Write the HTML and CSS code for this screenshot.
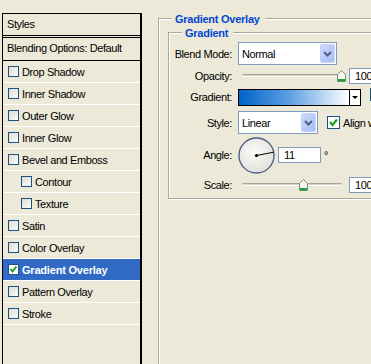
FILE: index.html
```html
<!DOCTYPE html>
<html>
<head>
<meta charset="utf-8">
<link rel="stylesheet" href="styles.css">
</head>
<body>
<div class="page">
  <div class="styles-list">
    <div class="sl-head">Styles</div>
    <div class="sl-blend">Blending Options: Default</div>
    <div class="item"><span class="cb"></span>Drop Shadow</div>
    <div class="item"><span class="cb"></span>Inner Shadow</div>
    <div class="item"><span class="cb"></span>Outer Glow</div>
    <div class="item"><span class="cb"></span>Inner Glow</div>
    <div class="item"><span class="cb"></span>Bevel and Emboss</div>
    <div class="item sub"><span class="cb"></span>Contour</div>
    <div class="item sub"><span class="cb"></span>Texture</div>
    <div class="item"><span class="cb"></span>Satin</div>
    <div class="item"><span class="cb"></span>Color Overlay</div>
    <div class="item sel"><span class="cb on"><svg width="9" height="9" viewBox="0 0 9 9"><path d="M1.5 4 L3.5 6.5 L7.5 1.5" fill="none" stroke="#21a121" stroke-width="2"/></svg></span>Gradient Overlay</div>
    <div class="item"><span class="cb"></span>Pattern Overlay</div>
    <div class="item"><span class="cb"></span>Stroke</div>
  </div>

  <div class="main">
    <div class="group outer">
      <div class="g-head"><span class="seg"></span><span class="g-title">Gradient Overlay</span><span class="seg fill"></span></div>
      <div class="group inner">
        <div class="g-head"><span class="seg"></span><span class="g-title">Gradient</span><span class="seg fill"></span></div>
        <div class="rows">
          <div class="row r1">
            <label class="lbl">Blend Mode:</label>
            <div class="select wide"><span class="sel-text">Normal</span><span class="btn"><svg width="13" height="17" viewBox="0 0 13 17"><polyline points="3,7 6.5,10.5 10,7" fill="none" stroke="#4d6185" stroke-width="2"/></svg></span></div>
          </div>
          <div class="row r2">
            <label class="lbl">Opacity:</label>
            <div class="slider"><div class="track"></div><svg class="thumb t-op" width="9" height="12" viewBox="0 0 9 12"><path d="M0.5 4.5 L4.5 0.5 L8.5 4.5 V11.5 H0.5 Z" fill="#f6f6f2" stroke="#7f8c80"/><rect x="1" y="9" width="7" height="2.5" fill="#22a334"/></svg></div>
            <div class="num">100</div>
          </div>
          <div class="row r3">
            <label class="lbl">Gradient:</label>
            <div class="grad"><span class="grad-fill"></span><span class="grad-arrow"><span class="tri"></span></span></div>
            <span class="cb13 rev"></span>
          </div>
          <div class="row r4">
            <label class="lbl">Style:</label>
            <div class="select narrow"><span class="sel-text">Linear</span><span class="btn"><svg width="13" height="17" viewBox="0 0 13 17"><polyline points="3,7 6.5,10.5 10,7" fill="none" stroke="#4d6185" stroke-width="2"/></svg></span></div>
            <span class="cb13 align"><svg width="11" height="11" viewBox="0 0 11 11"><path d="M2 5 L4.5 8 L9 2.5" fill="none" stroke="#21a121" stroke-width="2.2"/></svg></span>
            <span class="cb-text">Align with layer</span>
          </div>
          <div class="row r5">
            <label class="lbl">Angle:</label>
            <svg class="dial" width="37" height="37" viewBox="0 0 37 37">
              <defs><radialGradient id="dg" cx="45%" cy="40%" r="60%"><stop offset="0" stop-color="#fbfbf9"/><stop offset="1" stop-color="#e2e2dc"/></radialGradient></defs>
              <circle cx="18.5" cy="18.5" r="17.5" fill="url(#dg)" stroke="#4c6085" stroke-width="1.4"/>
              <line x1="18.5" y1="18.5" x2="35.7" y2="15.2" stroke="#000" stroke-width="1"/>
              <circle cx="18.5" cy="18.5" r="1.6" fill="#000"/>
            </svg>
            <div class="num angle">11</div>
            <span class="deg">°</span>
          </div>
          <div class="row r6">
            <label class="lbl">Scale:</label>
            <div class="slider"><div class="track"></div><svg class="thumb t-sc" width="9" height="12" viewBox="0 0 9 12"><path d="M0.5 4.5 L4.5 0.5 L8.5 4.5 V11.5 H0.5 Z" fill="#f6f6f2" stroke="#7f8c80"/><rect x="1" y="9" width="7" height="2.5" fill="#22a334"/></svg></div>
            <div class="num">100</div>
          </div>
        </div>
      </div>
    </div>
  </div>
</div>
</body>
</html>
```
FILE: styles.css
```css
html, body {
  margin: 0;
  padding: 0;
  background: #ece9d8;
  overflow: hidden;
}
body {
  font-family: "Liberation Sans", Arial, sans-serif;
  font-size: 11px;
  letter-spacing: -0.4px;
  color: #000;
}
.page {
  display: flex;
  width: 520px;
  height: 364px;
  align-items: flex-start;
}

/* left styles list */
.styles-list {
  margin: 13px 0 0 2px;
  width: 137px;
  height: 400px;
  border-top: 1px solid #000;
  border-left: 1px solid #000;
  border-right: 2px solid #000;
  flex-shrink: 0;
}
.sl-head {
  height: 21px;
  line-height: 21px;
  padding-left: 4px;
  border-bottom: 3px double #000;
}
.sl-blend {
  height: 22px;
  line-height: 21px;
  padding-left: 4px;
  border-bottom: 1px solid #000;
}
.item {
  display: flex;
  align-items: center;
  height: 21px;
  padding-left: 5px;
  border-bottom: 1px solid #fff;
  white-space: nowrap;
}
.item.sub { padding-left: 18px; }
.item.sel {
  background: #316ac5;
  color: #fff;
  font-weight: bold;
  letter-spacing: -0.2px;
}
.cb {
  width: 9px;
  height: 9px;
  border: 1px solid #1c5180;
  background: linear-gradient(135deg, #dcdcd5 0%, #f2f2ee 70%, #fff 100%);
  margin-right: 3px;
  flex-shrink: 0;
  display: flex;
}
.cb.on { background: #fff; }

/* right side */
.main {
  margin: 18px 0 0 16px;
  width: 360px;
  flex-shrink: 0;
}
.group {
  border-left: 1px solid #aca899;
  box-shadow: inset 1px 0 0 #fff;
}
.outer { height: 400px; }
.inner {
  margin: 12px 0 0 9px;
  border-bottom: 1px solid #aca899;
  box-shadow: inset 1px 0 0 #fff, 0 1px 0 #fff;
}
.g-head {
  display: flex;
  align-items: center;
  height: 2px;
}
.seg {
  width: 13px;
  height: 1px;
  border-top: 1px solid #aca899;
  background: #fff;
  flex-shrink: 0;
}
.seg.fill { flex: 1; }
.g-title {
  color: #0046d5;
  font-weight: bold;
  line-height: 13px;
  padding: 0 5px 0 3px;
  white-space: nowrap;
  letter-spacing: -0.25px;
}
.rows {
  padding: 8px 0 0 0;
}
.row {
  display: flex;
  align-items: center;
  white-space: nowrap;
}
.r1 { height: 23px; }
.r2 { height: 22px; }
.r3 { height: 20px; }
.r4 { height: 31px; }
.r5 { height: 34px; }
.r6 { height: 26px; }
.lbl {
  width: 63px;
  margin-right: 6px;
  text-align: right;
  flex-shrink: 0;
}
.select {
  display: flex;
  height: 23px;
  box-sizing: border-box;
  border: 1px solid #7f9db9;
  background: #fff;
  flex-shrink: 0;
}
.select.wide { width: 99px; }
.select.narrow { width: 80px; }
.sel-text {
  flex: 1;
  padding-left: 3px;
  line-height: 22px;
}
.btn {
  width: 15px;
  height: 19px;
  margin: 1px;
  box-sizing: border-box;
  border: 1px solid #c3d3fd;
  border-radius: 2px;
  background: linear-gradient(135deg, #c9d8fd 0%, #b6c9f7 60%, #a9bff2 100%);
  display: flex;
}
.slider {
  position: relative;
  width: 103px;
  height: 12px;
  margin-left: 4px;
  flex-shrink: 0;
}
.track {
  margin-top: 4px;
  width: 100px;
  height: 1px;
  border-top: 1px solid #a5a293;
  border-bottom: 1px solid #fff;
  border-radius: 2px;
  background: #d8d5c7;
}
.thumb {
  position: absolute;
  top: 0;
}
.t-op { left: 95px; }
.t-sc { left: 57px; }
.num {
  width: 40px;
  height: 16px;
  box-sizing: border-box;
  border: 1px solid #7f9db9;
  background: #fff;
  padding-left: 5px;
  line-height: 14px;
  margin-left: 4px;
  flex-shrink: 0;
}
.num.angle {
  width: 43px;
  margin-left: 3px;
}
.deg {
  margin-left: 3px;
}
.dial { flex-shrink: 0; }
.grad {
  display: flex;
  width: 123px;
  height: 17px;
  box-sizing: border-box;
  border: 1px solid #000;
  flex-shrink: 0;
}
.grad-fill {
  flex: 1;
  border-right: 1px solid #000;
  background: linear-gradient(90deg, #0062c9 0%, #5a9fe2 45%, #ffffff 100%);
}
.grad-arrow {
  width: 10px;
  background: #fff;
  display: flex;
  align-items: center;
  justify-content: center;
}
.tri {
  width: 0;
  height: 0;
  border-left: 3px solid transparent;
  border-right: 3px solid transparent;
  border-top: 3px solid #000;
  margin-top: 1px;
}
.cb13 {
  width: 11px;
  height: 11px;
  border: 1px solid #1c5180;
  background: #fff;
  flex-shrink: 0;
  display: flex;
}
.rev {
  margin-left: 9px;
  align-self: flex-start;
  margin-top: 1px;
  background: linear-gradient(135deg, #dcdcd5, #fff);
}
.align { margin-left: 9px; }
.cb-text { margin-left: 3px; }
```
